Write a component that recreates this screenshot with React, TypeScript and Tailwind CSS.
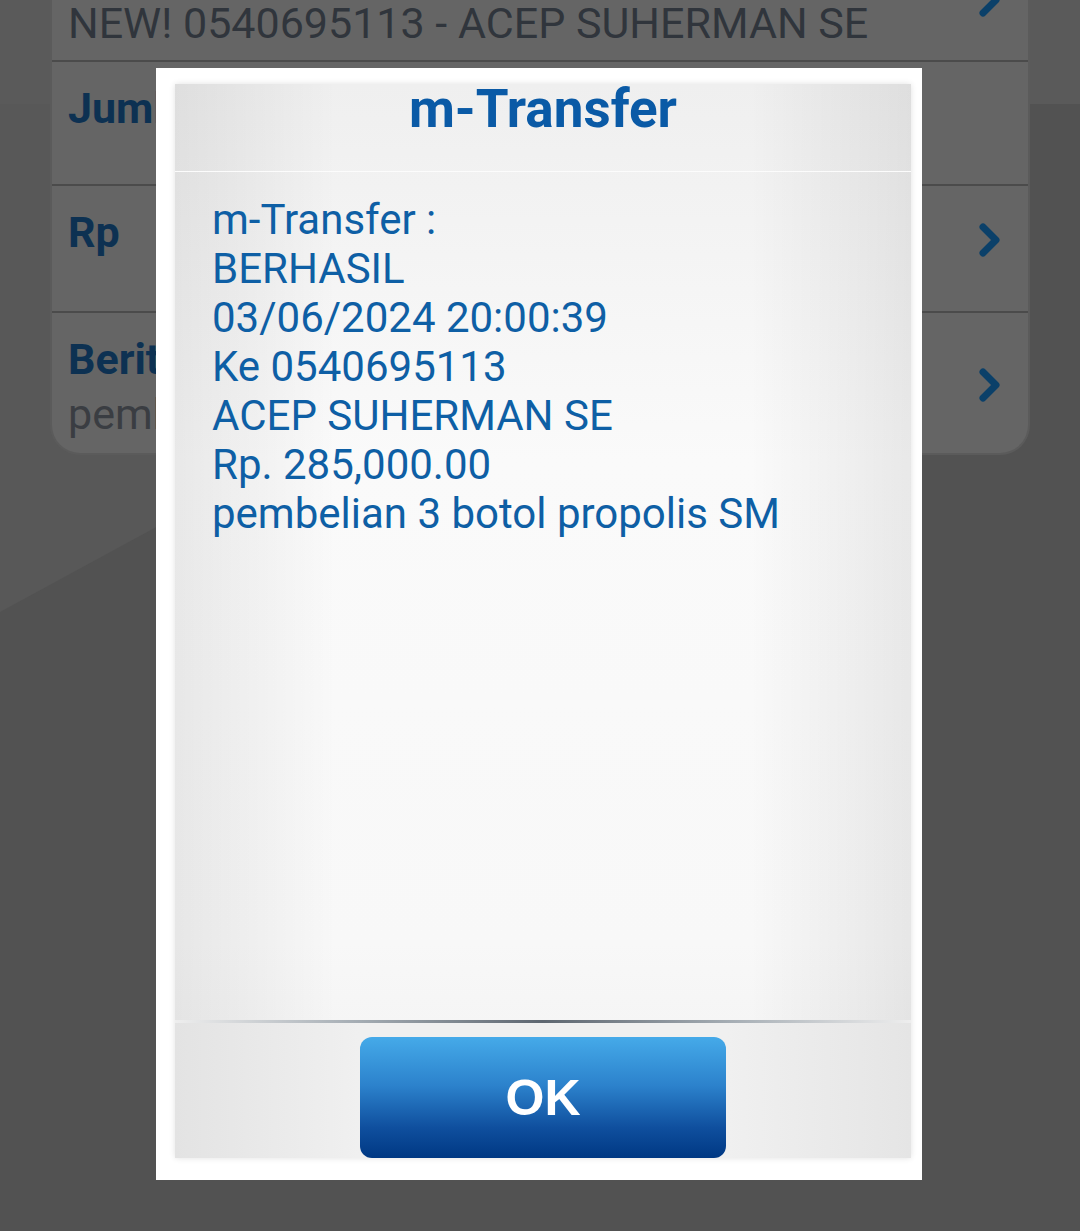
import React from 'react';

const Chevron = ({ className }: { className?: string }) => (
  <svg viewBox="0 0 24 36" className={className} fill="none">
    <path d="M5 5 L18 18 L5 31" stroke="#0b4069" strokeWidth="7" strokeLinecap="round" strokeLinejoin="round" />
  </svg>
);

const lines = [
  'm-Transfer :',
  'BERHASIL',
  '03/06/2024 20:00:39',
  'Ke 0540695113',
  'ACEP SUHERMAN SE',
  'Rp. 285,000.00',
  'pembelian 3 botol propolis SM',
];

export default function App() {
  return (
    <div className="relative w-[1080px] h-[1231px] overflow-hidden bg-[#525252] font-['Roboto',sans-serif]">
      {/* dimmed page decoration behind the form */}
      <svg className="absolute inset-0" width="1080" height="1231">
        <rect x="0" y="0" width="1080" height="104" fill="#5a5a5a" />
        <polygon points="0,104 160,104 160,525 0,612" fill="#585858" />
      </svg>

      {/* dimmed form card */}
      <div className="relative ml-[50px] w-[980px] -mt-[70px] bg-[#656565] rounded-b-[30px] border-x-2 border-b-2 border-[#5b5b5b]">
        <div className="relative h-[132px] pt-[69px] pl-[16px] border-b-2 border-[#4b4b4b]">
          <div className="text-[43px] leading-[48px] text-[#30353c] whitespace-nowrap">NEW! 0540695113 - ACEP SUHERMAN SE</div>
          <Chevron className="absolute right-[26px] top-[52px] w-[24px] h-[36px]" />
        </div>
        <div className="h-[124px] pt-[22px] pl-[16px] border-b-2 border-[#4b4b4b]">
          <div className="text-[43px] leading-[48px] font-bold text-[#0d3152]">Jumlah</div>
        </div>
        <div className="flex items-start justify-between h-[127px] pt-[22px] pl-[16px] pr-[26px] border-b-2 border-[#4b4b4b]">
          <div className="text-[43px] leading-[48px] font-bold text-[#0d3152]">Rp</div>
          <Chevron className="mt-[14px] w-[24px] h-[36px]" />
        </div>
        <div className="flex items-start justify-between h-[140px] pt-[22px] pl-[16px] pr-[26px]">
          <div>
            <div className="text-[43px] leading-[48px] font-bold text-[#0d3152]">Berita</div>
            <div className="text-[43px] leading-[62px] text-[#3a3d42]">pembelian</div>
          </div>
          <Chevron className="mt-[32px] w-[24px] h-[36px]" />
        </div>
      </div>

      {/* dialog */}
      <div className="absolute left-[156px] top-[68px] w-[766px] h-[1112px] bg-white pt-[16px] pl-[19px] pr-[11px]">
        <div className="flex flex-col h-[1074px] shadow-[0_0_6px_rgba(0,0,0,0.12)] bg-[linear-gradient(to_right,rgba(0,0,0,0.07),rgba(0,0,0,0)_22%,rgba(0,0,0,0)_78%,rgba(0,0,0,0.07)),linear-gradient(to_bottom,#efefef,#fafafa_35%,#f8f8f8_80%,#f0f0f0)]">
          <div className="h-[88px] border-b border-[#fcfcfc]">
            <h1 className="text-center text-[53px] leading-[50px] font-bold text-[#0a5aa6]">m-Transfer</h1>
          </div>
          <div className="flex-1 pt-[23px] pl-[37px] text-[42px] leading-[49px] text-[#0e5fa5]">
            {lines.map((l) => (
              <div key={l}>{l}</div>
            ))}
          </div>
          <div className="h-[3px] bg-[linear-gradient(to_right,#eeeeee,#a4acb3_25%,#5d6670_50%,#a4acb3_75%,#eeeeee)]" />
          <div className="h-[135px] pt-[14px] flex justify-center bg-[linear-gradient(to_right,#e3e3e3,#f0f0f0_25%,#f0f0f0_75%,#e5e5e5)]">
            <button className="w-[366px] h-[121px] rounded-[12px] bg-[linear-gradient(to_bottom,#45aae9_0%,#2c82cc_40%,#0f4f9e_75%,#003883_100%)] flex items-center justify-center">
              <span className="font-['Liberation_Sans',Arial,sans-serif] font-bold text-[50px] leading-none text-white">OK</span>
            </button>
          </div>
        </div>
      </div>
    </div>
  );
}
